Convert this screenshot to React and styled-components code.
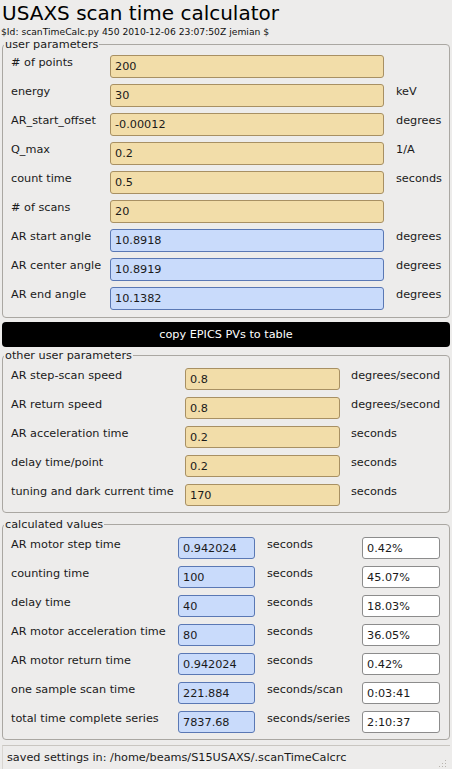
import React from 'react';
import styled, { createGlobalStyle } from 'styled-components';

const GlobalStyle = createGlobalStyle`
  html, body {
    margin: 0;
    padding: 0;
    background: #edeceb;
  }
  body {
    font-family: "DejaVu Sans", "Liberation Sans", sans-serif;
    color: #1a1a1a;
  }
`;

const Window = styled.div`
  width: 452px;
  height: 769px;
  display: flex;
  flex-direction: column;
  box-sizing: border-box;
  overflow: hidden;
  background: #edeceb;
`;

const Title = styled.h1`
  margin: 0;
  padding: 0 0 0 2px;
  font-size: 20px;
  font-weight: normal;
  line-height: 26px;
  color: #000;
`;

const Revision = styled.div`
  padding-left: 1px;
  font-size: 9.2px;
  line-height: 12px;
  color: #111;
`;

const Group = styled.fieldset`
  margin: ${({ $top }) => $top || '0'} 2px 0 2px;
  padding: ${({ $pad }) => $pad || '4px 8px 7px'};
  border: 1px solid #aaa7a2;
  border-radius: 4px;
  min-width: 0;
`;

const Legend = styled.legend`
  margin-left: -7px;
  padding: 0 1px;
  font-size: 11.25px;
  line-height: 13px;
  color: #1a1a1a;
`;

const Rows = styled.div`
  display: grid;
  grid-template-columns: ${({ $cols }) => $cols};
  row-gap: ${({ $tall }) => ($tall ? '6px' : '7px')};
  align-items: start;
`;

const Label = styled.div`
  font-size: 11.25px;
  line-height: 14px;
  padding-top: 1px;
  white-space: nowrap;
`;

const Unit = styled(Label)`
  padding-left: ${({ $indent }) => $indent || '12px'};
`;

const palette = {
  tan: { bg: '#f2dda9', border: '#a89063' },
  blue: { bg: '#c9dbfb', border: '#5a78b4' },
  white: { bg: '#ffffff', border: '#8c8c8c' },
};

const Field = styled.div`
  box-sizing: border-box;
  height: ${({ $tall }) => ($tall ? '23px' : '22px')};
  padding: 0 4px;
  display: flex;
  align-items: center;
  font-size: 11.25px;
  border-radius: 3px;
  white-space: nowrap;
  overflow: hidden;
  background: ${({ $kind }) => palette[$kind].bg};
  border: 1px solid ${({ $kind }) => palette[$kind].border};
`;

const CopyButton = styled.button`
  margin: 4px 2px 0 2px;
  height: 25px;
  border: none;
  border-radius: 4px;
  background: #000;
  color: #fff;
  font-family: "DejaVu Sans", "Liberation Sans", sans-serif;
  font-size: 11.25px;
  font-weight: normal;
  cursor: pointer;
`;

const StatusBar = styled.div`
  margin: 5px 2px 0 2px;
  flex: 1;
  display: flex;
  align-items: center;
  justify-content: space-between;
  padding: 0 3px 0 4px;
  border-top: 1px solid #c9c6c1;
  border-left: 1px solid #d8d5d0;
  font-size: 11.25px;
`;

const Grip = styled.svg`
  align-self: flex-end;
  margin-bottom: 1px;
`;

const userParams = [
  ['# of points', '200', 'tan', ''],
  ['energy', '30', 'tan', 'keV'],
  ['AR_start_offset', '-0.00012', 'tan', 'degrees'],
  ['Q_max', '0.2', 'tan', '1/A'],
  ['count time', '0.5', 'tan', 'seconds'],
  ['# of scans', '20', 'tan', ''],
  ['AR start angle', '10.8918', 'blue', 'degrees'],
  ['AR center angle', '10.8919', 'blue', 'degrees'],
  ['AR end angle', '10.1382', 'blue', 'degrees'],
];

const otherParams = [
  ['AR step-scan speed', '0.8', 'degrees/second'],
  ['AR return speed', '0.8', 'degrees/second'],
  ['AR acceleration time', '0.2', 'seconds'],
  ['delay time/point', '0.2', 'seconds'],
  ['tuning and dark current time', '170', 'seconds'],
];

const calculated = [
  ['AR motor step time', '0.942024', 'seconds', '0.42%'],
  ['counting time', '100', 'seconds', '45.07%'],
  ['delay time', '40', 'seconds', '18.03%'],
  ['AR motor acceleration time', '80', 'seconds', '36.05%'],
  ['AR motor return time', '0.942024', 'seconds', '0.42%'],
  ['one sample scan time', '221.884', 'seconds/scan', '0:03:41'],
  ['total time complete series', '7837.68', 'seconds/series', '2:10:37'],
];

const SizeGrip = () => (
  <Grip width="10" height="10" viewBox="0 0 10 10">
    {[[8, 2], [5, 5], [8, 5], [2, 8], [5, 8], [8, 8]].map(([x, y]) => (
      <rect key={`${x}-${y}`} x={x} y={y} width="1" height="1" fill="#b8b4ae" />
    ))}
  </Grip>
);

const App = () => (
  <Window>
    <GlobalStyle />
    <Title>USAXS scan time calculator</Title>
    <Revision>$Id: scanTimeCalc.py 450 2010-12-06 23:07:50Z jemian $</Revision>

    <Group $pad="4px 8px 7px">
      <Legend>user parameters</Legend>
      <Rows $cols="99px 274px 1fr" $tall>
        {userParams.map(([label, value, kind, unit]) => (
          <React.Fragment key={label}>
            <Label>{label}</Label>
            <Field $kind={kind} $tall>{value}</Field>
            <Unit>{unit}</Unit>
          </React.Fragment>
        ))}
      </Rows>
    </Group>

    <CopyButton>copy EPICS PVs to table</CopyButton>

    <Group $top="2px" $pad="6px 8px 6px">
      <Legend>other user parameters</Legend>
      <Rows $cols="174px 155px 1fr">
        {otherParams.map(([label, value, unit]) => (
          <React.Fragment key={label}>
            <Label>{label}</Label>
            <Field $kind="tan">{value}</Field>
            <Unit $indent="11px">{unit}</Unit>
          </React.Fragment>
        ))}
      </Rows>
    </Group>

    <Group $top="5px" $pad="6px 8px 6px">
      <Legend>calculated values</Legend>
      <Rows $cols="167px 77px 107px 78px">
        {calculated.map(([label, value, unit, share]) => (
          <React.Fragment key={label}>
            <Label>{label}</Label>
            <Field $kind="blue">{value}</Field>
            <Unit>{unit}</Unit>
            <Field $kind="white">{share}</Field>
          </React.Fragment>
        ))}
      </Rows>
    </Group>

    <StatusBar>
      <span>saved settings in: /home/beams/S15USAXS/.scanTimeCalcrc</span>
      <SizeGrip />
    </StatusBar>
  </Window>
);

export default App;
